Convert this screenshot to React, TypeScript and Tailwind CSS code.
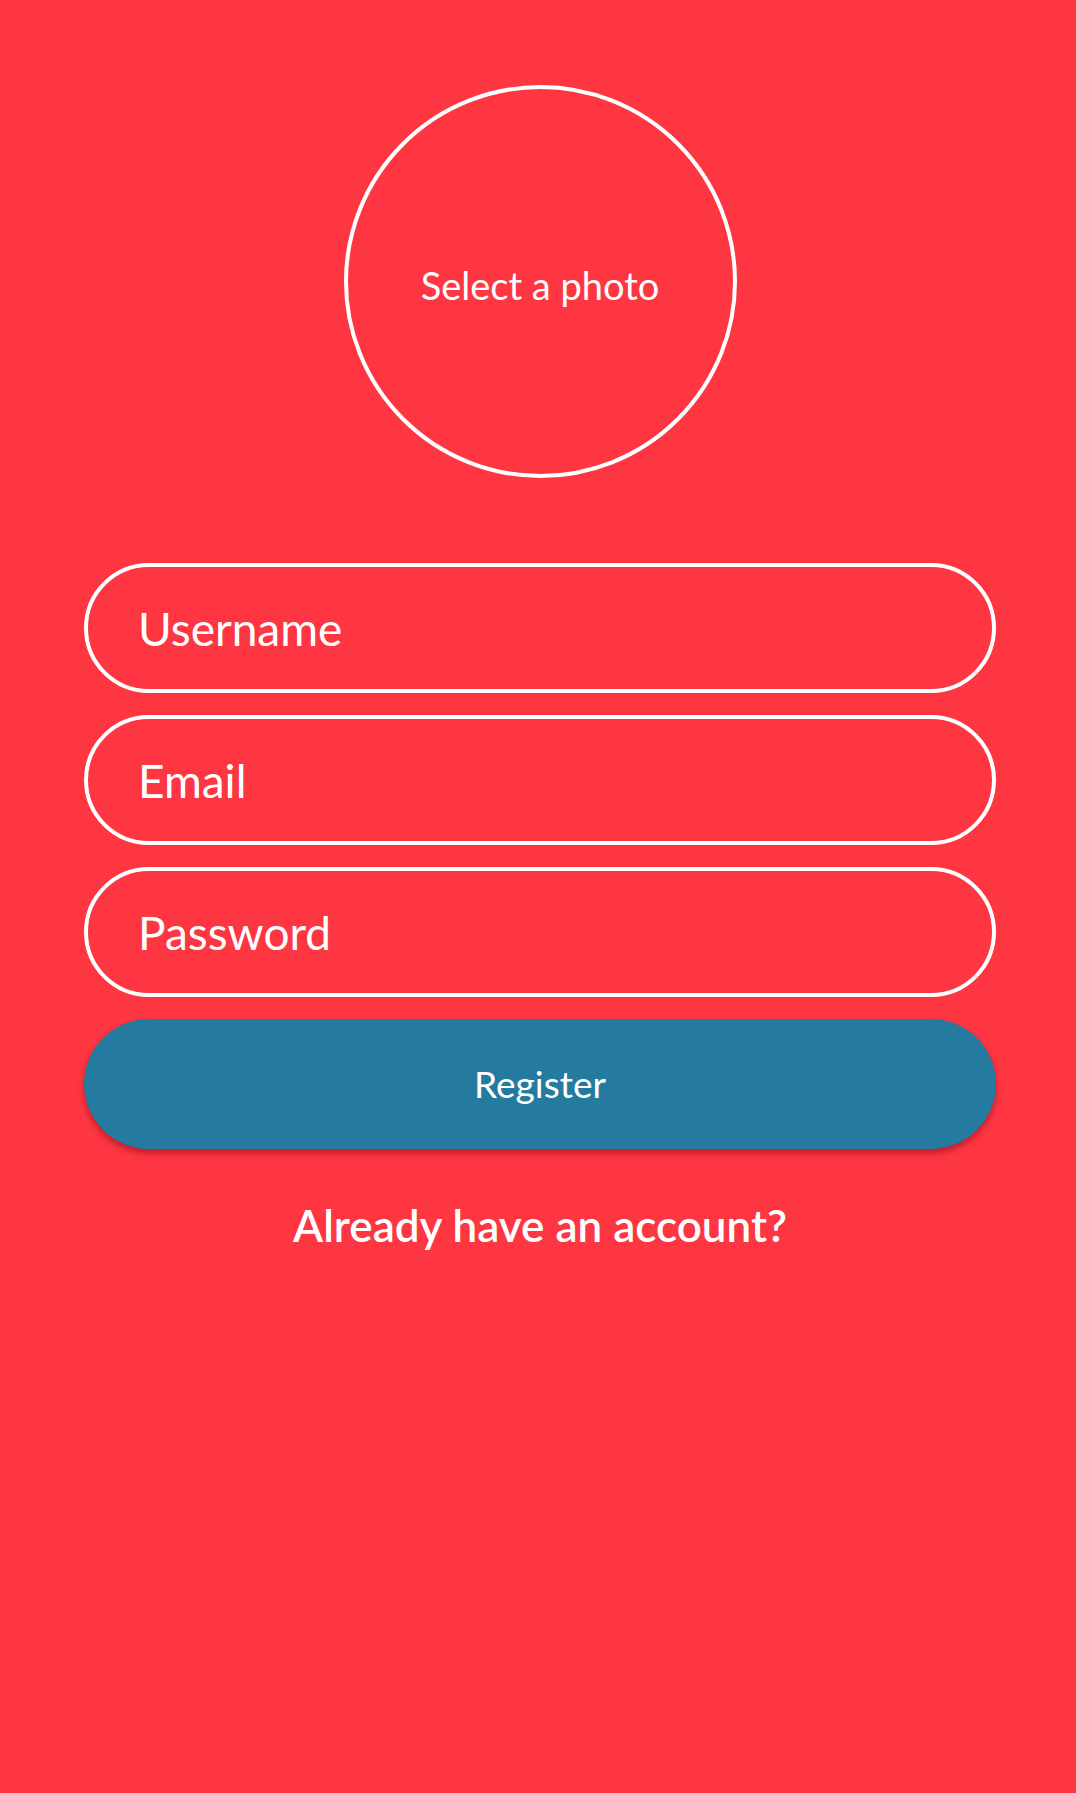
import { useState } from 'react'

// ─── Register screen ─────────────────────────────────────────────────────────

const FIELDS = [
  { name: 'username', placeholder: 'Username', type: 'text' },
  { name: 'email', placeholder: 'Email', type: 'email' },
  { name: 'password', placeholder: 'Password', type: 'password' },
]

export default function App() {
  const [values, setValues] = useState<Record<string, string>>({})

  return (
    <div
      className="min-h-screen w-full bg-[#fd3642] flex flex-col items-center pt-[85px] pl-1 text-white"
      style={{ fontFamily: 'Lato, "Open Sans", sans-serif' }}
    >
      {/* Photo picker */}
      <button
        type="button"
        className="w-[393px] h-[393px] rounded-full border-4 border-white flex items-center justify-center pt-[6px] text-[38px] leading-none text-white"
      >
        Select a photo
      </button>

      {/* Form */}
      <form
        className="w-[912px] mt-[85px] flex flex-col gap-[22px]"
        onSubmit={e => e.preventDefault()}
      >
        {FIELDS.map(f => (
          <input
            key={f.name}
            type={f.type}
            placeholder={f.placeholder}
            value={values[f.name] ?? ''}
            onChange={e => setValues(v => ({ ...v, [f.name]: e.target.value }))}
            className="h-[130px] w-full rounded-full border-4 border-white bg-transparent pl-[50px] pr-10 text-[46px] text-white placeholder:text-white outline-none"
          />
        ))}

        <button
          type="submit"
          className="h-[130px] w-full rounded-full bg-[#247b9f] text-[37px] text-white shadow-[0_4px_6px_rgba(120,0,10,0.45)]"
        >
          Register
        </button>
      </form>

      {/* Login link */}
      <button type="button" className="mt-[54px] text-[44px] leading-none font-semibold text-white">
        Already have an account?
      </button>
    </div>
  )
}
